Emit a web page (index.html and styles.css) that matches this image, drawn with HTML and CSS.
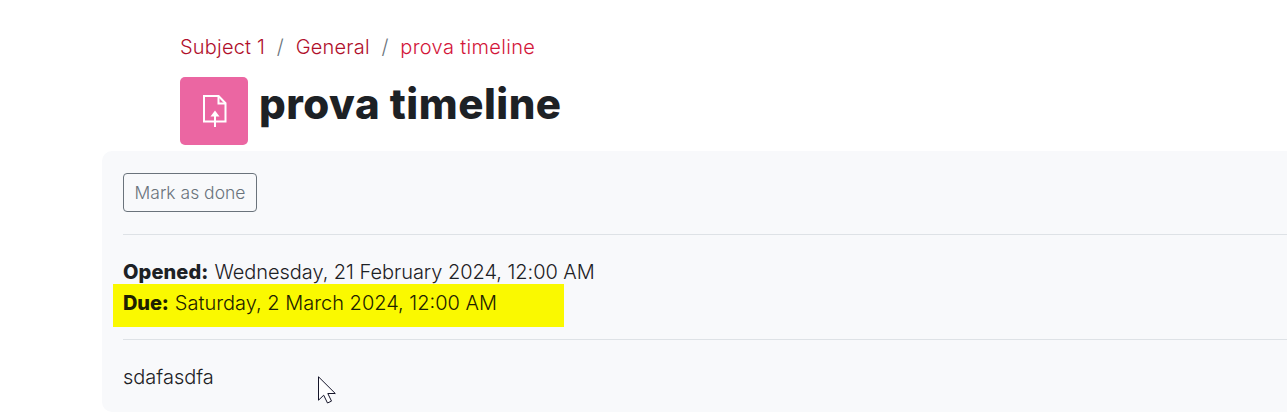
FILE: index.html
```
<!DOCTYPE html>
<html lang="en">
<head>
  <meta charset="UTF-8">
  <meta name="viewport" content="width=device-width, initial-scale=1.0">
  <title>prova timeline</title>
  <link rel="stylesheet" href="styles.css">
</head>
<body>

  <header class="page-header">
    <nav class="breadcrumb">
      <a class="crumb-subject" href="#">Subject 1</a>
      <span class="separator">/</span>
      <a class="crumb-section" href="#">General</a>
      <span class="separator">/</span>
      <a class="crumb-current" href="#">prova timeline</a>
    </nav>

    <div class="page-title">
      <div class="activity-icon">
        <svg width="24" height="34" viewBox="0 0 24 34" fill="none" stroke="#fff" stroke-width="2">
          <path d="M12 27.5H1V2h14.6L22.5 9.2v18.3H12"/>
          <path d="M15.5 2v7.5h7"/>
          <path d="M12 33V21"/>
          <path d="M12 16.5l4.5 6h-9z" fill="#fff" stroke="none"/>
        </svg>
      </div>
      <h1>prova timeline</h1>
    </div>
  </header>

  <main class="activity-header">
    <button class="completion-button">Mark as done</button>

    <div class="activity-dates">
      <div class="date-row"><strong class="opened-label">Opened:</strong><span class="opened-date">Wednesday, 21 February 2024, 12:00 AM</span></div>
      <div class="date-row date-due"><strong class="due-label">Due:</strong><span class="due-date">Saturday, 2 March 2024, 12:00 AM</span></div>
    </div>

    <div class="activity-description">sdafasdfa</div>
  </main>

  <svg class="cursor" width="20" height="30" viewBox="0 0 20 30">
    <path d="M.5.8v23.4l5.2-5 3.8 7.8 4-1.9-3.7-7.6h7.5z" fill="#fff" stroke="#15152a"/>
  </svg>

</body>
</html>
```

FILE: styles.css
```
* {
  box-sizing: border-box;
}

body {
  margin: 0;
  height: 412px;
  overflow: hidden;
  position: relative;
  background-color: #fff;
  color: #1d2125;
  font-family: Inter, "Liberation Sans", sans-serif;
  font-size: 20px;
  font-weight: 300;
  line-height: 31px;
}

.page-header {
  padding: 32px 0 0 180px;
}

.breadcrumb {
  display: flex;
  height: 45px;
  letter-spacing: 0.2px;
  white-space: nowrap;
}

.breadcrumb a {
  color: #b00f2b;
  text-decoration: none;
}

.breadcrumb .crumb-current {
  color: #d3163a;
  letter-spacing: 0.33px;
}

.separator {
  width: 30.5px;
  text-align: center;
  color: #6a737b;
}

.page-title {
  display: flex;
}

.activity-icon {
  display: flex;
  align-items: center;
  justify-content: center;
  width: 68px;
  height: 68px;
  padding-left: 2px;
  background-color: #eb66a2;
  border-radius: 5px;
}

.page-title h1 {
  margin: 0 0 0 11px;
  font-size: 42px;
  font-weight: 800;
  letter-spacing: 0.5px;
  line-height: 54px;
  white-space: nowrap;
}

.activity-header {
  margin: 6px 0 0 102px;
  height: 261px;
  padding: 22px 0 0 21px;
  background-color: #f8f9fb;
  border-radius: 10px 0 0 10px;
}

.completion-button {
  display: block;
  width: 134px;
  height: 39px;
  padding: 0;
  background-color: transparent;
  color: #6a737b;
  border: 1px solid #6a737b;
  border-radius: 4px;
  font-family: inherit;
  font-size: 17.5px;
  font-weight: 300;
  white-space: nowrap;
}

.activity-dates {
  margin-top: 22px;
  padding-top: 22px;
  height: 106px;
  border-top: 1px solid #dee2e6;
  border-bottom: 1px solid #dee2e6;
}

.date-row {
  display: flex;
  gap: 6px;
  height: 27px;
  white-space: nowrap;
}

.date-row strong {
  font-weight: 800;
}

.opened-label {
  letter-spacing: 0.1px;
}

.opened-date {
  letter-spacing: -0.04px;
}

.due-label {
  letter-spacing: -0.1px;
}

.date-due {
  width: 451px;
  height: 43px;
  margin-left: -10px;
  padding: 4px 0 0 10px;
  background-color: #faf900;
  color: #1d2100;
}

.activity-description {
  padding-top: 22px;
}

.cursor {
  position: absolute;
  left: 318px;
  top: 376px;
}
```
